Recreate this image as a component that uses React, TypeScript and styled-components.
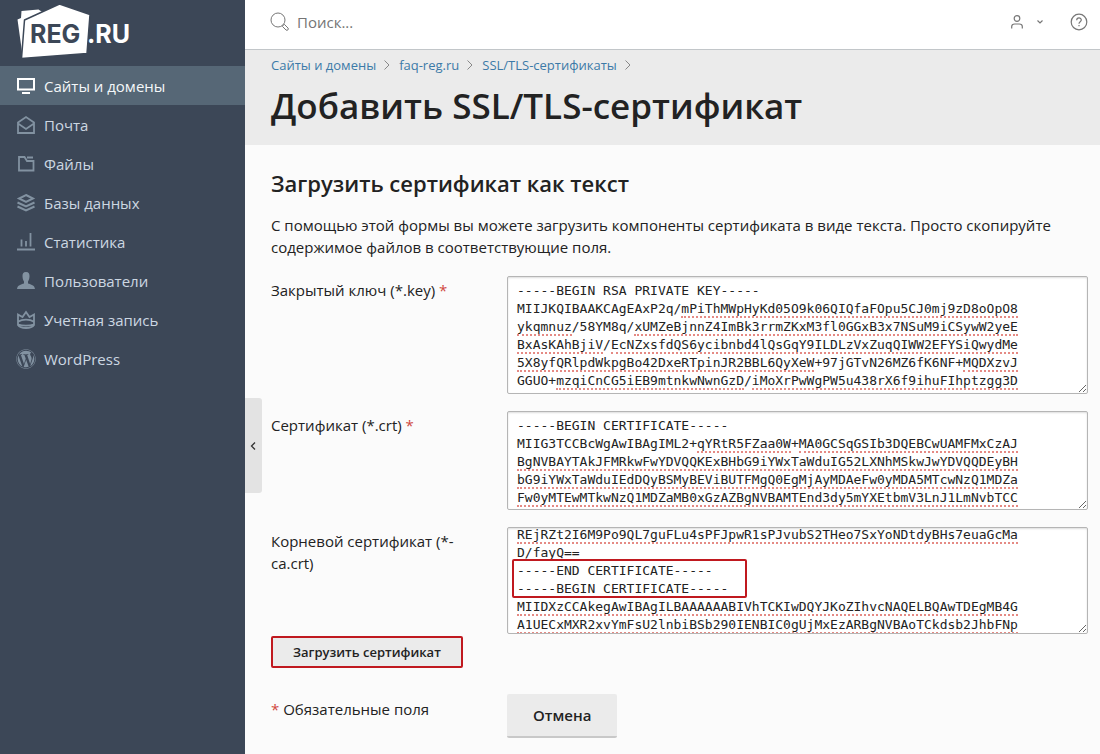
import React, { useLayoutEffect, useRef, useState } from "react";
import styled, { createGlobalStyle } from "styled-components";
import { FaWordpress } from "react-icons/fa";

const GlobalStyle = createGlobalStyle`
  *, *::before, *::after { box-sizing: border-box; }
  body {
    margin: 0;
    background: #fbfbfb;
    color: #222;
    font-family: "Open Sans", "Noto Sans", sans-serif;
    font-size: 15px;
    line-height: 22px;
  }
  h1, h2, p, ul, ol { margin: 0; padding: 0; }
  ul, ol { list-style: none; }
  a { text-decoration: none; }
`;

const Page = styled.div`
  display: flex;
  min-height: 100vh;
`;

const Sidebar = styled.aside`
  flex: 0 0 245px;
  background: #3c4757;
`;

const Brand = styled.a`
  display: block;
  height: 66px;
  svg { display: block; }
`;

const NavLink = styled.a<{ $active?: boolean }>`
  display: flex;
  align-items: center;
  gap: 8px;
  height: 39px;
  padding-left: 16px;
  color: ${(p) => (p.$active ? "#f4f7f9" : "#ccd7e2")};
  background: ${(p) => (p.$active ? "#566776" : "transparent")};
  svg {
    width: 20px;
    height: 20px;
    color: ${(p) => (p.$active ? "#fff" : "#8292a1")};
  }
`;

const Main = styled.main`
  flex: 1;
  min-width: 0;
`;

const TopBar = styled.header`
  display: flex;
  align-items: center;
  height: 50px;
  padding: 0 12px 5px 25px;
  background: #fff;
  border-bottom: 1px solid #c2c6c9;
  color: #777;
`;

const SearchLabel = styled.label`
  display: flex;
  align-items: center;
  flex: 1;
  gap: 7px;
`;

const SearchInput = styled.input`
  flex: 1;
  min-width: 0;
  padding: 0;
  border: 0;
  outline: 0;
  background: transparent;
  font: inherit;
  color: #333;
  &::placeholder { color: #757575; opacity: 1; }
`;

const IconButton = styled.button`
  display: flex;
  align-items: center;
  gap: 8px;
  padding: 0;
  margin-left: 22px;
  border: 0;
  background: none;
  color: #777;
`;

const PageHead = styled.div`
  height: 95px;
  padding: 4px 26px 0;
  background: #ebebeb;
`;

const Crumbs = styled.ol`
  display: flex;
  align-items: center;
  font-size: 13px;
  li { display: flex; align-items: center; }
  a { color: #3c7aa8; }
  svg { margin: 0 8px 0 7px; color: #888; }
`;

const Title = styled.h1`
  margin-top: 5px;
  font-size: 35px;
  line-height: 50px;
  font-weight: 600;
`;

const Content = styled.section`
  position: relative;
  padding: 23px 12px 16px 26px;
`;

const Collapse = styled.button`
  position: absolute;
  top: 253px;
  left: 0;
  display: flex;
  align-items: center;
  justify-content: center;
  width: 17px;
  height: 95px;
  padding: 0;
  border: 0;
  border-radius: 0 3px 3px 0;
  background: #e3e3e3;
  color: #333;
`;

const Subtitle = styled.h2`
  font-size: 22px;
  line-height: 30px;
  font-weight: 600;
`;

const Intro = styled.p`
  margin-top: 16px;
  padding-right: 8px;
`;

const Form = styled.form`
  margin-top: 18px;
`;

const Row = styled.div`
  display: grid;
  grid-template-columns: 236px minmax(0, 1fr);
  margin-bottom: 17px;
  &:nth-of-type(3) { margin-bottom: 2px; }
`;

const Label = styled.label`
  padding: 3px 40px 0 0;
`;

const Star = styled.span`
  color: #d0483e;
`;

const Field = styled.div`
  position: relative;
`;

const TextArea = styled.textarea<{ $height: number }>`
  display: block;
  width: 100%;
  height: ${(p) => p.$height}px;
  padding: 5px 9px;
  overflow: hidden;
  resize: both;
  border: 1px solid #b5b5b5;
  border-radius: 2px;
  outline: 0;
  background: #fff;
  box-shadow: inset 0 1px 2px #ddd;
  color: #222;
  font-family: "DejaVu Sans Mono", monospace;
  font-size: 13px;
  line-height: 18px;
  white-space: pre;
`;

const SpellLayer = styled.div`
  position: absolute;
  inset: 1px;
  padding: 5px 9px;
  overflow: hidden;
  pointer-events: none;
  font-family: "DejaVu Sans Mono", monospace;
  font-size: 13px;
`;

const SpellLine = styled.div`
  display: flex;
  height: 18px;
`;

const SpellMark = styled.span`
  height: 18px;
  border-bottom: 2px dotted #e58a84;
`;

const Highlight = styled.div`
  position: absolute;
  top: 32px;
  left: 5px;
  width: 235px;
  height: 39px;
  border: 2px solid #c0191f;
  border-radius: 2px;
  pointer-events: none;
`;

const UploadButton = styled.button`
  height: 32px;
  padding: 0 20px;
  border: 2px solid #c0191f;
  border-radius: 2px;
  background: #ebebeb;
  color: #222;
  font: 600 13px/18px "Open Sans", sans-serif;
`;

const Footer = styled.div`
  display: grid;
  grid-template-columns: 236px minmax(0, 1fr);
  margin-top: 26px;
`;

const Required = styled.p`
  padding-top: 4px;
`;

const CancelButton = styled.button`
  justify-self: start;
  height: 44px;
  padding: 0 26px;
  border: 0;
  border-bottom: 2px solid #c8c8c8;
  border-radius: 2px;
  background: #ebebeb;
  color: #222;
  font: 600 15px/22px "Open Sans", sans-serif;
`;

const Chevron = () => (
  <svg width="8" height="12" viewBox="0 0 8 12" fill="none" stroke="currentColor">
    <path d="M1.5 1.5 6 6l-4.500 4.500" />
  </svg>
);

const Logo = () => (
  <svg width="140" height="62" viewBox="0 0 140 62" role="img" aria-label="REG.RU">
    <path d="M17.500 19.500 21 18l.500-7 17-1.500 6 4-22 42z" fill="#fff" />
    <path d="M24.500 20 59.500 4l30.500 10.500L87 53.500l-65.500 5z" fill="#fff" stroke="#3c4757" strokeWidth="1.500" strokeLinejoin="round" />
    <g fontFamily="Inter, sans-serif" fontWeight="700" fontSize="25">
      <text x="30" y="43" fill="#3c4757">REG</text>
      <text x="87" y="43" fill="#fff">.RU</text>
    </g>
  </svg>
);

const line = { viewBox: "0 0 20 20", fill: "none", stroke: "currentColor", strokeWidth: 1.8 };

const icons = {
  sites: (
    <svg {...line} strokeWidth={2}><path d="M2 3h16v10.500H2zM6 17h8" /></svg>
  ),
  mail: (
    <svg {...line}><path d="M2 7.500 10 2l8 5.500V18H2zM2 8.500l8 5.500 8-5.500" /></svg>
  ),
  files: (
    <svg {...line}><path d="M3 3h5.500L11 7h6.500v9.500H3zM11 3.500h6" /></svg>
  ),
  db: (
    <svg {...line} strokeWidth={2}><path d="M10 2 17 5.500 10 9 3 5.500zM1.500 9.500 10 13.500l8.500-4M1.500 13.500 10 17.500l8.500-4" /></svg>
  ),
  stats: (
    <svg {...line}><path d="M1 17.500h18M5.500 14.500V7.500M10 14.500V9M14.500 14.500V1" /></svg>
  ),
  users: (
    <svg viewBox="0 0 20 20" fill="currentColor"><path d="M10 1C7.200 1 6.300 3 6.500 5.500c.200 3 1 4 1.500 5v2C5 13.500 1.500 14 1 18h18c-.500-4-4-4.500-7-5.500v-2c.500-1 1.300-2 1.500-5C13.700 3 12.800 1 10 1z" /></svg>
  ),
  account: (
    <svg {...line}><path d="M2 4.500 6.500 7 10 2l3.500 5L18 4.500V15c-2.500 4-13.500 4-16 0zM2.500 11.500c3.500-2.500 11.500-2.500 15 0M2.500 14.500c3.500 1.500 11.500 1.500 15 0" /></svg>
  ),
  wp: <FaWordpress />,
};

const nav = [
  { icon: icons.sites, text: "Сайты и домены", active: true },
  { icon: icons.mail, text: "Почта" },
  { icon: icons.files, text: "Файлы" },
  { icon: icons.db, text: "Базы данных" },
  { icon: icons.stats, text: "Статистика" },
  { icon: icons.users, text: "Пользователи" },
  { icon: icons.account, text: "Учетная запись" },
  { icon: icons.wp, text: "WordPress" },
];

const crumbs = ["Сайты и домены", "faq-reg.ru", "SSL/TLS-сертификаты"];

const keyText = `-----BEGIN RSA PRIVATE KEY-----
MIIJKQIBAAKCAgEAxP2q/mPiThMWpHyKd05O9k06QIQfaFOpu5CJ0mj9zD8oOpO8
ykqmnuz/58YM8q/xUMZeBjnnZ4ImBk3rrmZKxM3fl0GGxB3x7NSuM9iCSywW2yeE
BxAsKAhBjiV/EcNZxsfdQS6ycibnbd4lQsGqY9ILDLzVxZuqQIWW2EFYSiQwydMe
5X8yfQRlpdWkpgBo42DxeRTpinJR2BBL6QyXeW+97jGTvN26MZ6fK6NF+MQDXzvJ
GGUO+mzqiCnCG5iEB9mtnkwNwnGzD/iMoXrPwWgPW5u438rX6f9ihuFIhptzgg3D`;

const certText = `-----BEGIN CERTIFICATE-----
MIIG3TCCBcWgAwIBAgIML2+qYRtR5FZaa0W+MA0GCSqGSIb3DQEBCwUAMFMxCzAJ
BgNVBAYTAkJFMRkwFwYDVQQKExBHbG9iYWxTaWduIG52LXNhMSkwJwYDVQQDEyBH
bG9iYWxTaWduIEdDQyBSMyBEViBUTFMgQ0EgMjAyMDAeFw0yMDA5MTcwNzQ1MDZa
Fw0yMTEwMTkwNzQ1MDZaMB0xGzAZBgNVBAMTEnd3dy5mYXEtbmV3LnJ1LmNvbTCC`;

const rootText = `REjRZt2I6M9Po9QL7guFLu4sPFJpwR1sPJvubS2THeo7SxYoNDtdyBHs7euaGcMa
D/fayQ==
-----END CERTIFICATE-----
-----BEGIN CERTIFICATE-----
MIIDXzCCAkegAwIBAgILBAAAAAABIVhTCKIwDQYJKoZIhvcNAQELBQAwTDEgMB4G
A1UECxMXR2xvYmFsU2lnbiBSb290IENBIC0gUjMxEzARBgNVBAoTCkdsb2JhbFNp`;

const accepted = new Set([
  "MIIJKQIBAAKCAgEAxP2q", "58YM8q", "97jGTvN26MZ6fK6NF", "GGUO",
  "MIIG3TCCBcWgAwIBAgIML2", "D", "fayQ", "BEGIN", "END", "RSA",
  "PRIVATE", "KEY", "CERTIFICATE",
]);

/* Spans of a line that the spell checker underlines, with the blank run before each. */
function misspelled(text: string) {
  const marks: { gap: number; size: number }[] = [];
  let end = 0;
  for (const m of text.matchAll(/[A-Za-z0-9]+/g)) {
    if (accepted.has(m[0])) continue;
    marks.push({ gap: m.index! - end, size: m[0].length });
    end = m.index! + m[0].length;
  }
  return marks;
}

type PemProps = { id: string; initial: string; height: number; scroll?: number; children?: React.ReactNode };

function PemField({ id, initial, height, scroll = 0, children }: PemProps) {
  const [value, setValue] = useState(initial);
  const area = useRef<HTMLTextAreaElement>(null);
  const layer = useRef<HTMLDivElement>(null);
  useLayoutEffect(() => {
    area.current!.scrollTop = scroll;
    layer.current!.scrollTop = scroll;
  }, [scroll]);
  return (
    <Field>
      <TextArea
        id={id}
        ref={area}
        $height={height}
        spellCheck={false}
        value={value}
        onChange={(e) => setValue(e.target.value)}
        onScroll={(e) => { layer.current!.scrollTop = e.currentTarget.scrollTop; }}
      />
      <SpellLayer ref={layer} aria-hidden="true">
        {value.split("\n").map((text, i) => (
          <SpellLine key={i}>
            {misspelled(text).map((m, j) => (
              <SpellMark key={j} style={{ marginLeft: `${m.gap}ch`, width: `${m.size}ch` }} />
            ))}
          </SpellLine>
        ))}
      </SpellLayer>
      {children}
    </Field>
  );
}

export default function App() {
  return (
    <Page>
      <GlobalStyle />
      <Sidebar>
        <Brand href="#"><Logo /></Brand>
        <nav>
          <ul>
            {nav.map((n) => (
              <li key={n.text}>
                <NavLink href="#" $active={n.active}>{n.icon}{n.text}</NavLink>
              </li>
            ))}
          </ul>
        </nav>
      </Sidebar>
      <Main>
        <TopBar>
          <SearchLabel>
            <svg width="20" height="20" viewBox="0 0 20 20" fill="none" stroke="currentColor">
              <circle cx="8" cy="8" r="7" />
              <path d="m12.300 14.300 2-2 3.700 3.700c1.200 1.200-.800 3.200-2 2z" />
            </svg>
            <SearchInput type="text" placeholder="Поиск..." aria-label="Поиск" />
          </SearchLabel>
          <IconButton aria-label="Профиль">
            <svg width="14" height="16" viewBox="0 0 14 16" fill="none" stroke="currentColor" strokeWidth="1.200">
              <circle cx="7" cy="4.500" r="2.800" />
              <path d="M1.700 14.500v-2c0-2 1.500-2.500 3-2.500h4.600c1.500 0 3 .500 3 2.500v2" />
            </svg>
            <svg width="16" height="8" viewBox="0 0 16 8" fill="none" stroke="currentColor" strokeWidth="1.200">
              <path d="m5.500 2.500 2.500 2.500 2.500-2.500" />
            </svg>
          </IconButton>
          <IconButton aria-label="Справка">
            <svg width="18" height="18" viewBox="0 0 18 18" fill="none" stroke="currentColor" strokeWidth="1.200">
              <circle cx="9" cy="9" r="7.800" />
              <path d="M6.700 7.300c0-3.200 4.600-3 4.600-.300 0 1.700-2.300 1.800-2.300 3.700M9 12v1.300" />
            </svg>
          </IconButton>
        </TopBar>
        <PageHead>
          <Crumbs>
            {crumbs.map((c) => (
              <li key={c}><a href="#">{c}</a><Chevron /></li>
            ))}
          </Crumbs>
          <Title>Добавить SSL/TLS-сертификат</Title>
        </PageHead>
        <Content>
          <Collapse aria-label="Свернуть меню">
            <svg width="7" height="10" viewBox="0 0 7 10" fill="none" stroke="currentColor" strokeWidth="1.300">
              <path d="M5 1.500 1.500 5 5 8.500" />
            </svg>
          </Collapse>
          <Subtitle>Загрузить сертификат как текст</Subtitle>
          <Intro>
            С помощью этой формы вы можете загрузить компоненты сертификата в виде текста. Просто скопируйте содержимое файлов в соответствующие поля.
          </Intro>
          <Form onSubmit={(e) => e.preventDefault()}>
            <Row>
              <Label htmlFor="key">Закрытый ключ (*.key) <Star>*</Star></Label>
              <PemField id="key" initial={keyText} height={118} />
            </Row>
            <Row>
              <Label htmlFor="crt">Сертификат (*.crt) <Star>*</Star></Label>
              <PemField id="crt" initial={certText} height={99} />
            </Row>
            <Row>
              <Label htmlFor="ca">Корневой сертификат (*-ca.crt)</Label>
              <PemField id="ca" initial={rootText} height={107} scroll={7}>
                <Highlight />
              </PemField>
            </Row>
            <UploadButton type="submit">Загрузить сертификат</UploadButton>
            <Footer>
              <Required><Star>*</Star> Обязательные поля</Required>
              <CancelButton type="button">Отмена</CancelButton>
            </Footer>
          </Form>
        </Content>
      </Main>
    </Page>
  );
}
